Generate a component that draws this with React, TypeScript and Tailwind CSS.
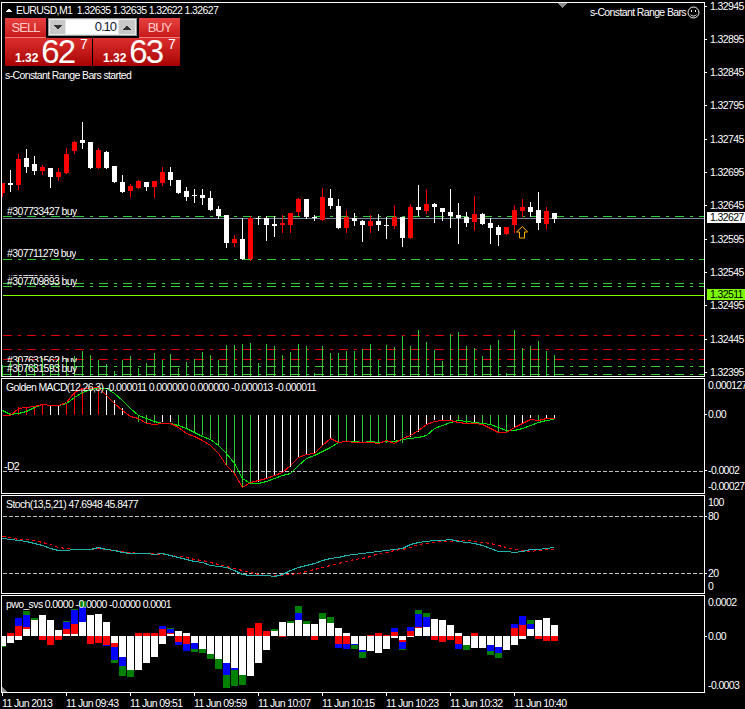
import React from 'react';

// [colour, high, bodyTop, bodyBottom, low], one candle every 8px starting at x=2
const candles: [string, number, number, number, number][] = [
  ['r', 183, 183, 193, 196], ['w', 170, 183, 185, 191], ['r', 154, 159, 185, 189], ['w', 149, 158, 167, 172],
  ['w', 156, 164, 171, 174], ['r', 165, 167, 171, 174], ['w', 168, 168, 177, 187], ['r', 168, 172, 177, 180],
  ['r', 148, 154, 173, 173], ['r', 141, 142, 151, 153], ['w', 122, 140, 143, 148], ['w', 142, 142, 168, 168],
  ['r', 148, 150, 168, 168], ['w', 151, 152, 168, 168], ['w', 166, 166, 182, 182], ['w', 175, 182, 192, 192],
  ['r', 184, 186, 191, 196], ['r', 180, 181, 188, 188], ['w', 182, 182, 187, 190], ['r', 181, 181, 187, 197],
  ['r', 167, 172, 183, 185], ['w', 167, 172, 180, 185], ['w', 180, 180, 193, 193], ['w', 187, 191, 197, 200],
  ['w', 189, 195, 196, 202], ['w', 189, 195, 198, 204], ['w', 191, 198, 210, 210], ['w', 206, 209, 216, 218],
  ['w', 215, 215, 243, 247], ['r', 235, 239, 243, 246], ['w', 218, 239, 259, 259], ['r', 216, 218, 259, 260],
  ['w', 216, 218, 219, 224], ['w', 216, 218, 225, 240], ['w', 216, 224, 226, 236], ['r', 215, 223, 225, 232],
  ['r', 213, 213, 225, 232], ['r', 198, 199, 212, 215], ['w', 199, 199, 217, 218], ['w', 215, 217, 218, 220],
  ['r', 188, 197, 220, 220], ['w', 189, 198, 206, 208], ['w', 199, 206, 228, 228], ['r', 211, 217, 228, 232],
  ['w', 213, 218, 221, 225], ['w', 220, 221, 225, 241], ['r', 215, 221, 226, 232], ['w', 214, 221, 225, 230],
  ['w', 217, 225, 226, 238], ['r', 205, 217, 226, 228], ['w', 217, 217, 238, 246], ['r', 204, 207, 238, 238],
  ['w', 185, 207, 210, 215], ['r', 189, 204, 211, 213], ['w', 203, 204, 207, 222], ['w', 208, 208, 212, 220],
  ['w', 189, 212, 216, 227], ['w', 203, 215, 218, 243], ['w', 212, 217, 223, 226], ['r', 196, 214, 222, 230],
  ['w', 213, 214, 224, 224], ['w', 218, 223, 228, 243], ['w', 225, 227, 235, 245], ['r', 227, 227, 234, 234],
  ['r', 205, 210, 225, 232], ['r', 199, 207, 211, 216], ['w', 202, 207, 212, 216], ['w', 192, 210, 223, 229],
  ['r', 207, 211, 224, 228], ['w', 213, 213, 219, 222],
];

const volumes = [
  365, 361, 357, 364, 363, 358, 365, 358, 358, 356, 351, 355, 360, 364, 371, 360, 356, 368, 363, 353, 360, 354, 368, 362,
  359, 352, 355, 360, 345, 345, 344, 343, 363, 344, 346, 355, 352, 344, 346, 373, 346, 353, 353, 351, 351, 349, 344, 360,
  345, 347, 336, 346, 330, 342, 350, 361, 334, 332, 346, 348, 356, 345, 340, 373, 330, 348, 346, 341, 351, 355,
];

// MACD histogram, [colour, end y] from the zero line at y=415
const macdBars: [string, number][] = [
  ['#f00', 415], ['#f00', 413], ['#f00', 407], ['#f00', 407], ['#f00', 406], ['#f00', 404], ['#fff', 406], ['#fff', 406],
  ['#f00', 403], ['#f00', 392], ['#f00', 388], ['#fff', 388], ['#f00', 388], ['#fff', 390], ['#fff', 400], ['#fff', 408],
  ['#fff', 415], ['#3c3', 422], ['#3c3', 423], ['#3c3', 423], ['#fff', 422], ['#fff', 422], ['#3c3', 425], ['#3c3', 428],
  ['#3c3', 432], ['#3c3', 435], ['#3c3', 440], ['#3c3', 445], ['#3c3', 465], ['#3c3', 475], ['#3c3', 487], ['#3c3', 483],
  ['#fff', 482], ['#fff', 478], ['#fff', 475], ['#fff', 473], ['#fff', 467], ['#fff', 457], ['#fff', 454], ['#fff', 453],
  ['#fff', 445], ['#fff', 438], ['#3c3', 442], ['#3c3', 442], ['#fff', 442], ['#3c3', 442], ['#3c3', 442], ['#3c3', 443],
  ['#3c3', 443], ['#fff', 440], ['#3c3', 443], ['#fff', 437], ['#fff', 432], ['#fff', 425], ['#fff', 420], ['#fff', 420],
  ['#fff', 420], ['#3c3', 420], ['#3c3', 423], ['#fff', 422], ['#3c3', 424], ['#3c3', 425], ['#3c3', 432], ['#3c3', 432],
  ['#fff', 427], ['#fff', 423], ['#fff', 418], ['#3c3', 420], ['#fff', 418], ['#fff', 418],
];

const macdGreen = [
  410, 414, 413, 411, 407, 404, 405, 405, 403, 397, 392, 389, 388, 388, 393, 400, 408, 415, 418, 421, 423, 423, 425, 428,
  432, 436, 439, 445, 453, 463, 478, 483, 483, 481, 478, 475, 473, 465, 458, 455, 451, 447, 442, 441, 441, 442, 441, 442,
  441, 441, 439, 438, 437, 435, 428, 425, 422, 420, 421, 422, 423, 424, 427, 430, 430, 428, 425, 422, 420, 419,
];
const macdRed = [
  415, 415, 408, 407, 406, 404, 405, 405, 402, 392, 388, 388, 387, 395, 403, 410, 416, 418, 423, 424, 423, 423, 427, 433,
  436, 440, 445, 453, 465, 473, 487, 482, 480, 478, 475, 472, 465, 457, 454, 453, 445, 438, 442, 441, 442, 442, 442, 443,
  440, 443, 438, 435, 430, 424, 421, 420, 420, 422, 423, 423, 424, 428, 432, 432, 427, 423, 419, 420, 418, 418,
];

const stochMain = [
  538, 539, 540, 541, 543, 545, 548, 550, 550, 549, 549, 549, 547, 549, 550, 552, 553, 553, 553, 554, 553, 555, 557, 559,
  561, 562, 565, 566, 567, 570, 574, 575, 575, 575, 576, 574, 570, 567, 565, 563, 560, 558, 557, 555, 554, 553, 552, 551,
  550, 549, 548, 544, 542, 541, 540, 540, 539, 541, 542, 543, 545, 548, 551, 551, 552, 551, 549, 549, 548, 547,
];
const stochSignal = [
  536, 537, 539, 539, 540, 542, 544, 547, 548, 549, 549, 549, 548, 549, 550, 551, 552, 553, 553, 553, 554, 555, 556, 557,
  559, 560, 562, 564, 566, 568, 570, 572, 574, 575, 575, 575, 574, 573, 571, 569, 567, 565, 563, 561, 559, 558, 556, 553,
  552, 550, 549, 547, 544, 543, 542, 541, 541, 540, 540, 541, 542, 543, 545, 547, 549, 550, 551, 550, 549, 549,
];

// Stacked pwo histogram segments per bar: colour letter, y from, y to
const W = 'w', R = 'r', B = 'b', G = 'g';
const pwo: [string, number, number][][] = [
  [[W, 636, 646], [G, 646, 647]],
  [[R, 633, 636], [W, 636, 643]],
  [[B, 618, 626], [R, 626, 636], [W, 636, 640]],
  [[G, 611, 615], [B, 615, 627], [R, 627, 629], [W, 629, 636]],
  [[G, 618, 620], [W, 620, 636]],
  [[W, 615, 636], [R, 636, 640]],
  [[W, 620, 636], [R, 636, 645]],
  [[W, 630, 636], [R, 636, 640]],
  [[G, 621, 622], [B, 622, 629], [R, 629, 634], [W, 634, 636]],
  [[G, 609, 610], [B, 610, 624], [R, 624, 634], [W, 634, 636]],
  [[G, 601, 607], [B, 607, 622], [W, 622, 636]],
  [[W, 615, 636], [R, 636, 644]],
  [[W, 614, 636], [R, 636, 643]],
  [[W, 622, 636], [R, 636, 645], [B, 645, 646]],
  [[W, 636, 643], [R, 643, 647], [B, 647, 660], [G, 660, 663]],
  [[W, 636, 657], [B, 657, 666], [G, 666, 676]],
  [[W, 636, 670], [G, 670, 677]],
  [[R, 633, 636], [W, 636, 670]],
  [[R, 633, 636], [W, 636, 663]],
  [[R, 633, 636], [W, 636, 657]],
  [[B, 626, 629], [R, 629, 636], [W, 636, 644]],
  [[G, 628, 629], [B, 629, 633], [R, 633, 634], [W, 634, 636]],
  [[W, 631, 636], [R, 636, 642], [B, 642, 645]],
  [[W, 633, 636], [R, 636, 644], [B, 644, 651]],
  [[W, 636, 643], [B, 643, 649], [G, 649, 652]],
  [[W, 636, 649], [G, 649, 653]],
  [[W, 636, 654], [G, 654, 659]],
  [[W, 636, 659], [G, 659, 669]],
  [[W, 636, 663], [B, 663, 675], [G, 675, 688]],
  [[W, 636, 668], [B, 668, 670], [G, 670, 686]],
  [[W, 636, 675], [G, 675, 685]],
  [[R, 628, 636], [W, 636, 676]],
  [[R, 623, 636], [W, 636, 663]],
  [[R, 631, 636], [W, 636, 650]],
  [[G, 629, 631], [W, 631, 636]],
  [[W, 622, 636], [R, 636, 637]],
  [[G, 621, 623], [W, 623, 636]],
  [[G, 606, 613], [B, 613, 620], [W, 620, 636]],
  [[G, 621, 624], [W, 624, 636]],
  [[W, 624, 636], [R, 636, 640]],
  [[G, 613, 619], [W, 619, 636]],
  [[G, 617, 623], [W, 623, 636]],
  [[W, 628, 636], [R, 636, 644], [B, 644, 648]],
  [[W, 633, 636], [R, 636, 644], [B, 644, 649]],
  [[W, 636, 644], [B, 644, 645], [G, 645, 649]],
  [[W, 636, 650], [B, 650, 652], [G, 652, 658]],
  [[R, 635, 636], [W, 636, 651]],
  [[R, 633, 636], [W, 636, 653]],
  [[R, 635, 636], [W, 636, 649]],
  [[B, 628, 632], [R, 632, 636], [W, 636, 638]],
  [[W, 636, 640], [R, 640, 642], [B, 642, 649], [G, 649, 650]],
  [[B, 627, 631], [R, 631, 636], [W, 636, 637]],
  [[G, 610, 614], [B, 614, 627], [R, 627, 628], [W, 628, 636]],
  [[G, 613, 617], [B, 617, 627], [W, 627, 636]],
  [[W, 619, 636], [R, 636, 640]],
  [[W, 620, 636], [R, 636, 642]],
  [[W, 625, 636], [R, 636, 640]],
  [[W, 633, 636], [R, 636, 644], [B, 644, 649]],
  [[W, 636, 645], [G, 645, 650]],
  [[R, 633, 636], [W, 636, 648]],
  [[W, 636, 648]],
  [[W, 636, 645], [B, 645, 651], [G, 651, 655]],
  [[W, 636, 647], [B, 647, 653], [G, 653, 658]],
  [[W, 636, 650]],
  [[B, 624, 628], [R, 628, 636], [W, 636, 645]],
  [[B, 616, 625], [R, 625, 636], [W, 636, 639]],
  [[G, 620, 624], [B, 624, 629], [W, 629, 636]],
  [[W, 620, 636], [R, 636, 639]],
  [[W, 618, 636], [R, 636, 641]],
  [[W, 625, 636], [R, 636, 641]],
];
const pwoColor: Record<string, string> = { w: '#fff', r: '#f00', b: '#00f', g: '#008000' };

const priceAxis = [
  '1.32945', '1.32895', '1.32845', '1.32795', '1.32745', '1.32695',
  '1.32645', '1.32595', '1.32545', '1.32495', '1.32445', '1.32395',
].map((text, i) => ({ y: Math.floor(6 + 33.3 * i), text, tick: true, x: 5 }));

const times = [
  '11 Jun 2013', '11 Jun 09:43', '11 Jun 09:51', '11 Jun 09:59', '11 Jun 10:07',
  '11 Jun 10:15', '11 Jun 10:23', '11 Jun 10:32', '11 Jun 10:40',
];

const barX = (i: number) => 2 + i * 8;
const toPoints = (ys: number[]) => ys.map((y, i) => `${barX(i) + 0.5},${y + 0.5}`).join(' ');

const DASH_DOT = '9 6 3 6';

function HLine({ y, color, dash }: { y: number; color: string; dash?: string }) {
  return <line x1={3} x2={704} y1={y + 0.5} y2={y + 0.5} stroke={color} strokeDasharray={dash} />;
}

type AxisLabel = { y: number; text: string; tick?: boolean; x?: number };

// Right hand price column; top is the page y of the pane so labels can be given in page coordinates
function Axis({ top, labels, children }: { top: number; labels: AxisLabel[]; children?: React.ReactNode }) {
  return (
    <div className="relative w-[40px]">
      {labels.map((l) => (
        <React.Fragment key={l.text}>
          {l.tick && <div className="absolute left-0 h-px w-[2px] bg-white" style={{ top: l.y - top }} />}
          <span
            className="absolute whitespace-nowrap leading-[12px]"
            style={{ top: l.y - top - 6, left: l.x ?? 3 }}
          >
            {l.text}
          </span>
        </React.Fragment>
      ))}
      {children}
    </div>
  );
}

// One chart pane: white frame, svg whose viewBox is in page coordinates
function Pane({
  top,
  height,
  labels,
  axisExtra,
  children,
  overlay,
}: {
  top: number;
  height: number;
  labels: AxisLabel[];
  axisExtra?: React.ReactNode;
  children: React.ReactNode;
  overlay?: React.ReactNode;
}) {
  return (
    <div className="flex shrink-0" style={{ height }}>
      <div className="relative ml-px w-[704px] overflow-hidden border border-white">
        <svg
          className="absolute inset-0 block"
          width={702}
          height={height - 2}
          viewBox={`2 ${top + 1} 702 ${height - 2}`}
          shapeRendering="crispEdges"
        >
          {children}
        </svg>
        {overlay}
      </div>
      <Axis top={top} labels={labels}>
        {axisExtra}
      </Axis>
    </div>
  );
}

function TradeLabel({ text, x, y, clip }: { text: string; x: number; y: number; clip?: number }) {
  return (
    <span
      className="absolute overflow-hidden whitespace-pre leading-[12px]"
      style={{ left: x, top: y, height: clip }}
    >
      {text}
    </span>
  );
}

function TradePanel() {
  return (
    <div className="absolute left-[3px] top-[15px] flex w-[175px] flex-col">
      <div className="flex h-[20px] justify-between">
        <div className="w-[41px] border-b border-[#f08080] bg-linear-to-b from-[#e84040] to-[#c81818] text-center text-[13px] leading-[19px] tracking-[-1px] text-[#ffc8c8]">
          SELL
        </div>
        <div className="flex h-[18px] w-[89px] items-stretch gap-px border border-[#9a9a9a] bg-[#e8e8e8] p-px">
          <div className="flex w-[15px] items-center justify-center bg-[#c8c8c8]">
            <svg width="8" height="5" viewBox="0 0 8 5" shapeRendering="crispEdges">
              <path d="M0 0h8L4 5z" fill="#333" />
            </svg>
          </div>
          <div className="flex-1 bg-white pr-[2px] text-right text-[13px] leading-[14px] tracking-[-1px] text-[#101830]">0.10</div>
          <div className="flex w-[16px] items-center justify-center bg-[#c8c8c8]">
            <svg width="8" height="5" viewBox="0 0 8 5" shapeRendering="crispEdges">
              <path d="M0 5h8L4 0z" fill="#333" />
            </svg>
          </div>
        </div>
        <div className="w-[41px] border-b border-[#f08080] bg-linear-to-b from-[#e84040] to-[#c81818] text-center text-[13px] leading-[19px] tracking-[-1px] text-[#ffc8c8]">
          BUY
        </div>
      </div>
      <div className="flex h-[28px] justify-between">
        <PriceBlock big="62" />
        <PriceBlock big="63" />
      </div>
    </div>
  );
}

function PriceBlock({ big }: { big: string }) {
  return (
    <div className="relative flex h-[28px] w-[87px] items-end bg-linear-to-b from-[#dc2c2c] to-[#a80000] pl-[10px]">
      <span className="mb-[1px] text-[12px] leading-[14px] font-bold tracking-normal">1.32</span>
      <span className="ml-[3px] text-[33px] leading-[28px] tracking-[-2px]">{big}</span>
      <span className="ml-[6px] self-start text-[14px] leading-[13px] tracking-normal">7</span>
    </div>
  );
}

export default function App() {
  return (
    <div className="flex h-[709px] w-[745px] flex-col gap-px overflow-hidden bg-black pt-[2px] font-['Liberation_Sans',Arial,sans-serif] text-[10.5px] tracking-[-0.62px] text-white">
      {/* Main chart */}
      <Pane
        top={2}
        height={375}
        labels={priceAxis}
        axisExtra={
          <>
            <div className="absolute left-[2px] top-[210px] h-[11px] w-[38px] bg-white pl-[3px] leading-[11px] text-black">1.32627</div>
            <div className="absolute left-[2px] top-[287px] h-[11px] w-[38px] bg-[#7cfc00] pl-[3px] leading-[11px] text-black">1.32511</div>
          </>
        }
        overlay={
          <>
            <span className="absolute left-[14px] top-[1px] whitespace-pre leading-[12px]">
              EURUSD,M1  1.32635 1.32635 1.32622 1.32627
            </span>
            <span className="absolute right-[18px] top-[3px] leading-[12px]">s-Constant Range Bars</span>
            <TradePanel />
            <span className="absolute left-[3px] top-[66px] leading-[12px]">s-Constant Range Bars started</span>
            <TradeLabel text="#307733427 buy" x={5} y={202} />
            <TradeLabel text="#307711279 buy" x={5} y={244} />
            <TradeLabel text="#307709893 buy" x={5} y={270} clip={3} />
            <TradeLabel text="#307709893 buy" x={5} y={272} />
            <TradeLabel text="#307631562 buy" x={5} y={351} clip={8} />
            <TradeLabel text="#307631593 buy" x={5} y={359} />
          </>
        }
      >
        <path d="M5 12h7l-3.500-3.500z" fill="#fff" />
        <path d="M558 3h9l-4.500 5z" fill="#8a8a8a" />
        <g fill="none" stroke="#fff" shapeRendering="auto">
          <circle cx="693.5" cy="12.5" r="5.500" />
          <path d="M690.500 14.500c1.500 2 4.500 2 6 0" />
        </g>
        <rect x="691" y="10" width="1" height="2" fill="#fff" />
        <rect x="695" y="10" width="1" height="2" fill="#fff" />

        {[216, 259, 283, 286].map((y) => (
          <HLine key={y} y={y} color="#32cd32" dash={DASH_DOT} />
        ))}
        <HLine y={218} color="#778899" />
        <HLine y={295} color="#7fff00" />
        {[335, 349, 359].map((y) => (
          <HLine key={y} y={y} color="#e00000" dash={DASH_DOT} />
        ))}
        {[366, 374].map((y) => (
          <HLine key={y} y={y} color="#32cd32" dash={DASH_DOT} />
        ))}

        {candles.map(([c, high, top, bottom, low], i) => {
          const fill = c === 'r' ? '#f00' : '#fff';
          return (
            <g key={i} fill={fill}>
              <rect x={barX(i)} y={high} width={1} height={low - high + 1} />
              <rect x={barX(i) - 2} y={top} width={5} height={bottom - top} />
            </g>
          );
        })}
        {volumes.map((top, i) => (
          <rect key={i} x={barX(i)} y={top} width={1} height={376 - top} fill="#32cd32" />
        ))}
        <path d="M522.500 226.500l5 5.500h-3v6h-5v-6h-3z" fill="none" stroke="#ffb000" shapeRendering="auto" />
      </Pane>

      {/* MACD */}
      <Pane
        top={378}
        height={116}
        labels={[
          { y: 385, text: '0.000127' },
          { y: 414, text: '0.00', tick: true },
          { y: 470, text: '-0.0002', tick: true },
          { y: 486, text: '-0.000275' },
        ]}
        overlay={
          <>
            <span className="absolute left-[4px] top-[2px] whitespace-pre leading-[12px]">
              Golden MACD(12,26,3) -0.000011 0.000000 0.000000 -0.000013 -0.000011
            </span>
            <span className="absolute left-[2px] top-[81px] leading-[12px]">-D2</span>
          </>
        }
      >
        <HLine y={471} color="#c0c0c0" dash="4 2" />
        {macdBars.map(([color, end], i) => (
          <rect
            key={i}
            x={barX(i)}
            y={Math.min(end, 415)}
            width={1}
            height={Math.abs(end - 415)}
            fill={color}
          />
        ))}
        <polyline points={toPoints(macdGreen)} fill="none" stroke="#00e000" />
        <polyline points={toPoints(macdRed)} fill="none" stroke="#f00" />
      </Pane>

      {/* Stochastic */}
      <Pane
        top={495}
        height={99}
        labels={[
          { y: 502, text: '100' },
          { y: 516, text: '80', tick: true },
          { y: 573, text: '20', tick: true },
          { y: 586, text: '0' },
        ]}
        overlay={
          <span className="absolute left-[4px] top-[2px] whitespace-pre leading-[12px]">
            Stoch(13,5,21) 47.6948 45.8477
          </span>
        }
      >
        <HLine y={516} color="#c0c0c0" dash="4 2" />
        <HLine y={573} color="#c0c0c0" dash="4 2" />
        <polyline points={toPoints(stochSignal)} fill="none" stroke="#f00" strokeDasharray="3 3" />
        <polyline points={toPoints(stochMain)} fill="none" stroke="#20b2aa" />
      </Pane>

      {/* pwo */}
      <Pane
        top={595}
        height={98}
        labels={[
          { y: 602, text: '0.0002' },
          { y: 636, text: '0.00', tick: true },
          { y: 685, text: '-0.0003' },
        ]}
        overlay={
          <span className="absolute left-[4px] top-[2px] whitespace-pre leading-[12px]">
            pwo_svs 0.0000 -0.0000 -0.0000 0.0001
          </span>
        }
      >
        {pwo.map((segs, i) =>
          segs.map(([c, y0, y1]) => (
            <rect key={`${i}-${y0}`} x={barX(i) - 3} y={y0} width={7} height={y1 - y0} fill={pwoColor[c]} />
          )),
        )}
        <path d="M2 687l5 5H2z" fill="#8a8a8a" />
      </Pane>

      {/* Time axis */}
      <div className="-mt-px flex pl-[2px]">
        {times.map((t) => (
          <div key={t} className="flex w-[64px] shrink-0 flex-col items-start">
            <div className="h-[3px] w-px bg-white" />
            <span className="mt-px whitespace-nowrap leading-[12px]">{t}</span>
          </div>
        ))}
      </div>
    </div>
  );
}
